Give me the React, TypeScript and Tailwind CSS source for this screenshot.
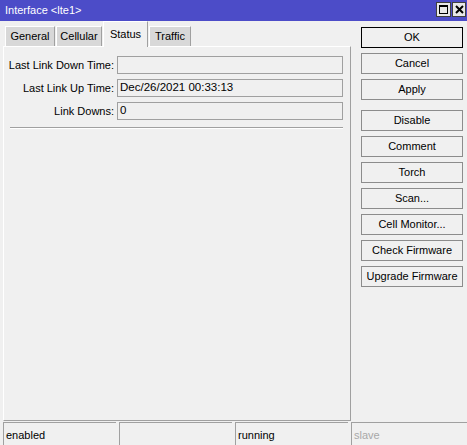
import React from 'react';

const fields = [
  { label: 'Last Link Down Time:', value: '' },
  { label: 'Last Link Up Time:', value: 'Dec/26/2021 00:33:13' },
  { label: 'Link Downs:', value: '0' },
];

const tabs = [
  { name: 'General', w: 'w-[50px]' },
  { name: 'Cellular', w: 'w-[46px]' },
  { name: 'Status', w: 'w-[45px]' },
  { name: 'Traffic', w: 'w-[42px]' },
];

const topButtons = ['OK', 'Cancel', 'Apply'];
const actionButtons = ['Disable', 'Comment', 'Torch', 'Scan...', 'Cell Monitor...', 'Check Firmware', 'Upgrade Firmware'];

function WinButton({ label, primary }: { label: string; primary?: boolean }) {
  return (
    <button
      className={`h-[21px] w-full bg-[#f0f0f0] text-[11px] text-black flex items-center justify-center border ${
        primary ? 'border-black' : 'border-[#8c8c8c]'
      }`}
    >
      {label}
    </button>
  );
}

export default function App() {
  return (
    <div
      className="w-[467px] h-[445px] bg-[#f0f0f0] flex flex-col text-[11px] text-black overflow-hidden"
      style={{ fontFamily: '"Liberation Sans", Arial, sans-serif' }}
    >
      {/* Title bar */}
      <div className="h-[21px] bg-[#4c4cc8] flex items-center justify-between pl-[5px] shrink-0">
        <span className="text-white text-[11px]">Interface &lt;lte1&gt;</span>
        <div className="flex gap-[1px] pr-[1px] self-start mt-[2px]">
          <div className="w-[15px] h-[15px] bg-[#e8e8e8] border border-[#404040] flex items-center justify-center">
            <div className="w-[9px] h-[9px] border border-black border-t-2"></div>
          </div>
          <div className="w-[14px] h-[15px] bg-[#e8e8e8] border border-[#404040] flex items-center justify-center">
            <svg width="9" height="9" viewBox="0 0 9 9">
              <path d="M1 1L8 8M8 1L1 8" stroke="black" strokeWidth="2" />
            </svg>
          </div>
        </div>
      </div>

      {/* Body */}
      <div className="flex flex-1 min-h-0">
        <div className="ml-[3px] w-[348px] flex flex-col">
          {/* Tabs */}
          <div className="h-[25px] flex items-end pl-[2px] gap-[1px] relative z-10">
            {tabs.map((tab) =>
              tab.name === 'Status' ? (
                <div
                  key={tab.name}
                  className={`${tab.w} h-[26px] -mb-[1px] bg-[#f0f0f0] border-t border-l border-white border-r border-r-[#a0a0a0] flex items-center justify-center`}
                >
                  {tab.name}
                </div>
              ) : (
                <div
                  key={tab.name}
                  className={`${tab.w} h-[20px] bg-[#d8d8d8] border-t border-l border-white border-r border-r-[#a0a0a0] flex items-center justify-center`}
                >
                  {tab.name}
                </div>
              )
            )}
          </div>

          {/* Tab panel */}
          <div className="flex-1 border-t border-l border-white border-r border-b border-r-[#a0a0a0] border-b-[#a0a0a0] pt-[9px] flex flex-col">
            <div className="flex flex-col gap-[5px]">
              {fields.map((f) => (
                <div key={f.label} className="flex items-center gap-[3px]">
                  <span className="w-[110px] text-right whitespace-nowrap">{f.label}</span>
                  <div className="w-[226px] h-[18px] border border-[#a0a0a0] bg-[#f0f0f0] pl-[2px] flex items-center text-[11.5px]">
                    {f.value}
                  </div>
                </div>
              ))}
            </div>
            <div className="ml-[6px] w-[333px] mt-[7px] border-t border-[#a0a0a0] border-b border-b-white"></div>
          </div>
        </div>

        {/* Side buttons */}
        <div className="ml-[10px] w-[102px] pt-[6px] flex flex-col">
          <div className="flex flex-col gap-[5px]">
            {topButtons.map((b) => (
              <WinButton key={b} label={b} primary={b === 'OK'} />
            ))}
          </div>
          <div className="flex flex-col gap-[5px] mt-[10px]">
            {actionButtons.map((b) => (
              <WinButton key={b} label={b} />
            ))}
          </div>
        </div>
      </div>

      {/* Status bar */}
      <div className="h-[23px] mt-[1px] pl-[3px] flex gap-[3px] shrink-0">
        {[
          { text: 'enabled', dim: false },
          { text: '', dim: false },
          { text: 'running', dim: false },
          { text: 'slave', dim: true },
        ].map((c, i) => (
          <div
            key={i}
            className={`${i === 3 ? 'flex-1' : 'w-[113px]'} h-full border-t border-l border-[#a0a0a0] pl-[2px] pt-[4px] ${
              c.dim ? 'text-[#a8a8a8]' : 'text-black'
            }`}
          >
            {c.text}
          </div>
        ))}
      </div>
    </div>
  );
}
